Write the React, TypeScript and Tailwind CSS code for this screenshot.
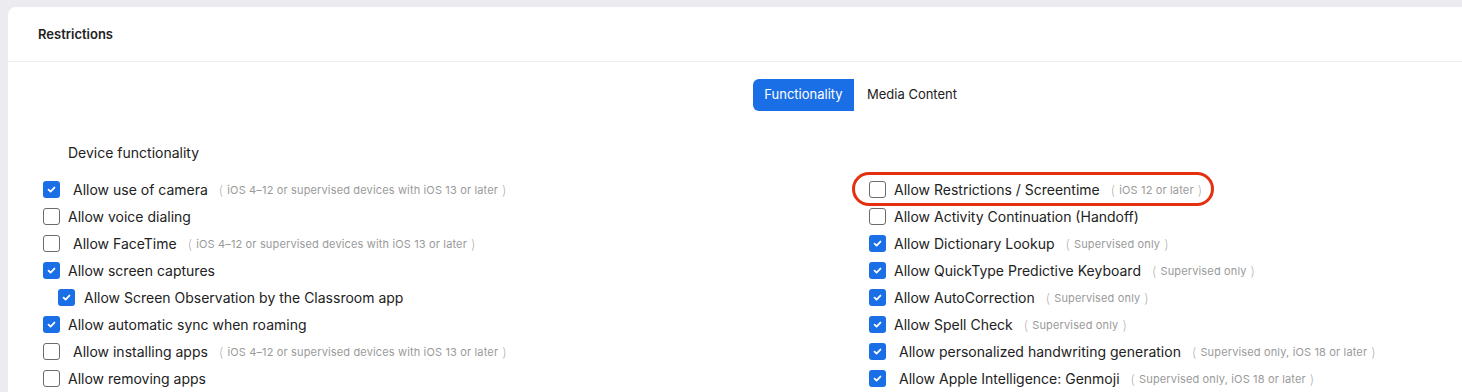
import React from "react";

type Item = {
  label: string;
  note?: string;
  checked: boolean;
  extra?: boolean;
  indent?: boolean;
  highlight?: boolean;
};

const left: Item[] = [
  { label: "Allow use of camera", note: "iOS 4–12 or supervised devices with iOS 13 or later", checked: true, extra: true },
  { label: "Allow voice dialing", checked: false },
  { label: "Allow FaceTime", note: "iOS 4–12 or supervised devices with iOS 13 or later", checked: false, extra: true },
  { label: "Allow screen captures", checked: true },
  { label: "Allow Screen Observation by the Classroom app", checked: true, indent: true },
  { label: "Allow automatic sync when roaming", checked: true },
  { label: "Allow installing apps", note: "iOS 4–12 or supervised devices with iOS 13 or later", checked: false, extra: true },
  { label: "Allow removing apps", checked: false },
];

const right: Item[] = [
  { label: "Allow Restrictions / Screentime", note: "iOS 12 or later", checked: false, highlight: true },
  { label: "Allow Activity Continuation (Handoff)", checked: false },
  { label: "Allow Dictionary Lookup", note: "Supervised only", checked: true },
  { label: "Allow QuickType Predictive Keyboard", note: "Supervised only", checked: true },
  { label: "Allow AutoCorrection", note: "Supervised only", checked: true },
  { label: "Allow Spell Check", note: "Supervised only", checked: true },
  { label: "Allow personalized handwriting generation", note: "Supervised only, iOS 18 or later", checked: true, extra: true },
  { label: "Allow Apple Intelligence: Genmoji", note: "Supervised only, iOS 18 or later", checked: true, extra: true },
];

function Box({ checked }: { checked: boolean }) {
  if (checked) {
    return (
      <span className="flex h-[17px] w-[17px] shrink-0 items-center justify-center rounded-[3px] bg-[#1a6fe6]">
        <svg width="11" height="11" viewBox="0 0 12 12" fill="none">
          <path d="M2.8 6.2 L5 8.3 L9.2 3.9" stroke="white" strokeWidth="2" strokeLinecap="round" strokeLinejoin="round" />
        </svg>
      </span>
    );
  }
  return <span className="block h-[17px] w-[17px] shrink-0 rounded-[3px] border border-[#6b6b6b] bg-white" />;
}

function Row({ item }: { item: Item }) {
  return (
    <div className={`relative flex h-[27px] items-center ${item.indent ? "pl-[15px]" : ""}`}>
      {item.highlight && (
        <span className="pointer-events-none absolute left-[-17px] top-[-4px] h-[34px] w-[362px] rounded-full border-[3px] border-[#e4300f]" />
      )}
      <Box checked={item.checked} />
      <span className={`${item.extra ? "ml-[13px]" : item.indent ? "ml-[9px]" : "ml-[8px]"} whitespace-nowrap text-[14px] text-[#222]`}>
        {item.label}
      </span>
      {item.note && (
        <span className="ml-[11px] flex translate-y-[1px] items-center whitespace-nowrap text-[11px] tracking-[0.15px] text-[#9a9a9a]">
          <span className="mr-[4px] text-[13px] font-extralight">(</span>
          {item.note}
          <span className="ml-[4px] text-[13px] font-extralight">)</span>
        </span>
      )}
    </div>
  );
}

export default function App() {
  return (
    <div
      className="h-[392px] w-[1462px] overflow-hidden bg-[#ececf0] pl-[8px] pt-[7px]"
      style={{ fontFamily: 'Inter, "Noto Sans CJK SC", sans-serif' }}
    >
      <div className="h-[420px] w-[1500px] rounded-tl-[8px] bg-white">
        <div className="flex h-[55px] items-center border-b border-[#f0f0f2] pl-[30px] pt-[2px]">
          <span className="text-[13px] font-semibold text-[#222]">Restrictions</span>
        </div>
        <div className="ml-[745px] mt-[17px] flex h-[32px] items-stretch">
          <div className="flex w-[101px] items-center justify-center rounded-l-[6px] bg-[#1a6fe6] text-[13px] text-white">
            Functionality
          </div>
          <div className="flex items-center px-[13px] text-[13px] text-[#222]">Media Content</div>
        </div>
        <div className="ml-[60px] mt-[32px] text-[14px] leading-[20px] text-[#222]">Device functionality</div>
        <div className="mt-[13px] grid grid-cols-[826px_1fr] pl-[35px]">
          <div className="flex flex-col">
            {left.map((it) => (
              <Row key={it.label} item={it} />
            ))}
          </div>
          <div className="flex flex-col">
            {right.map((it) => (
              <Row key={it.label} item={it} />
            ))}
          </div>
        </div>
      </div>
    </div>
  );
}
